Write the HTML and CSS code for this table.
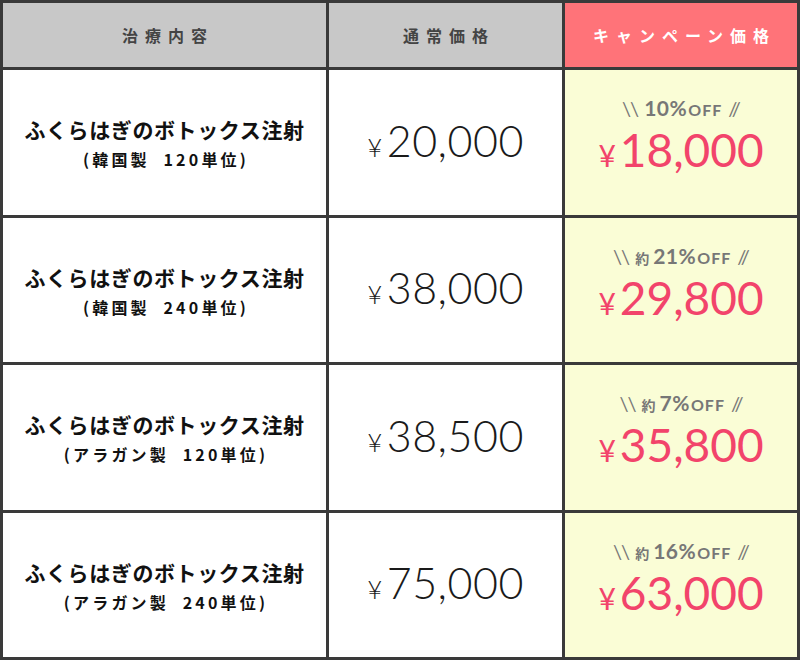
FILE: index.html
```html
<!DOCTYPE html>
<html lang="ja">
<head>
<meta charset="utf-8">
<link rel="stylesheet" href="styles.css">
</head>
<body>
<div class="table">
  <div class="th">治療内容</div>
  <div class="th">通常価格</div>
  <div class="th th-camp">キャンペーン価格</div>

  <div class="td name"><div class="main">ふくらはぎのボトックス注射</div><div class="sub">(韓国製&nbsp; 120単位)</div></div>
  <div class="td price"><div class="pv"><span class="yen">¥</span>20,000</div></div>
  <div class="td camp"><div class="off"><span class="sl">\\</span><span class="pct">10%</span><span class="of">OFF</span><span class="sl">//</span></div><div class="cp"><span class="yen">¥</span>18,000</div></div>

  <div class="td name"><div class="main">ふくらはぎのボトックス注射</div><div class="sub">(韓国製&nbsp; 240単位)</div></div>
  <div class="td price"><div class="pv"><span class="yen">¥</span>38,000</div></div>
  <div class="td camp"><div class="off"><span class="sl">\\</span><span class="ya">約</span><span class="pct">21%</span><span class="of">OFF</span><span class="sl">//</span></div><div class="cp"><span class="yen">¥</span>29,800</div></div>

  <div class="td name"><div class="main">ふくらはぎのボトックス注射</div><div class="sub">(アラガン製&nbsp; 120単位)</div></div>
  <div class="td price"><div class="pv"><span class="yen">¥</span>38,500</div></div>
  <div class="td camp"><div class="off"><span class="sl">\\</span><span class="ya">約</span><span class="pct">7%</span><span class="of">OFF</span><span class="sl">//</span></div><div class="cp"><span class="yen">¥</span>35,800</div></div>

  <div class="td name"><div class="main">ふくらはぎのボトックス注射</div><div class="sub">(アラガン製&nbsp; 240単位)</div></div>
  <div class="td price"><div class="pv"><span class="yen">¥</span>75,000</div></div>
  <div class="td camp"><div class="off"><span class="sl">\\</span><span class="ya">約</span><span class="pct">16%</span><span class="of">OFF</span><span class="sl">//</span></div><div class="cp"><span class="yen">¥</span>63,000</div></div>
</div>
</body>
</html>
```
FILE: styles.css
```css
html, body { margin: 0; padding: 0; background: #fff; }
body { font-family: "Noto Sans CJK JP", "Noto Sans", sans-serif; }
.table {
  width: 800px;
  height: 660px;
  box-sizing: border-box;
  background: #3a3a3a;
  padding: 3px;
  display: grid;
  grid-template-columns: 323px 233px 232px;
  grid-template-rows: 64px 145px 144px 145px 144px;
  gap: 3px;
}
.th {
  background: #c8c8c8;
  color: #444;
  font-weight: 700;
  font-size: 16px;
  letter-spacing: 7px;
  display: flex;
  align-items: center;
  justify-content: center;
  padding-left: 7px;
}
.th-camp { background: #ff7379; color: #fff; }
.td {
  background: #fff;
  display: flex;
  flex-direction: column;
  align-items: center;
  justify-content: center;
}
.name .main { font-size: 21px; font-weight: 700; color: #111; line-height: 30px; letter-spacing: 0.6px; }
.name .sub { font-size: 16px; font-weight: 700; color: #111; line-height: 24px; letter-spacing: 3.2px; margin-top: 3px; padding-left: 3px; }
.price {
  font-family: "Lato", "Open Sans", sans-serif;
  font-weight: 300;
  font-size: 43px;
  color: #1a1a1a;
  letter-spacing: 0.5px;
}
.pv { line-height: 50px; padding-top: 2px; }
.price .yen { font-size: 26px; margin-right: 4px; }
.camp { background: #fafdd6; padding-bottom: 8px; }
.off {
  color: #777;
  font-family: "Lato", "Open Sans", sans-serif;
  display: flex;
  align-items: baseline;
  gap: 4px;
  line-height: 24px;
}
.off .sl { font-size: 20px; font-weight: 400; letter-spacing: -1px; margin: 0 2px; }
.off .pct { font-size: 21px; font-weight: 700; letter-spacing: 0.5px; }
.off .of { font-size: 16px; font-weight: 700; letter-spacing: 1px; margin-left: -3px; }
.off .ya { font-family: "Noto Sans CJK JP", sans-serif; font-size: 14px; font-weight: 700; }
.cp {
  font-family: "Lato", "Open Sans", sans-serif;
  color: #f2446b;
  font-size: 46px;
  line-height: 52px;
  font-weight: 400;
  margin-top: 2px;
}
.cp .yen { font-size: 30px; margin-right: 4px; }
```
